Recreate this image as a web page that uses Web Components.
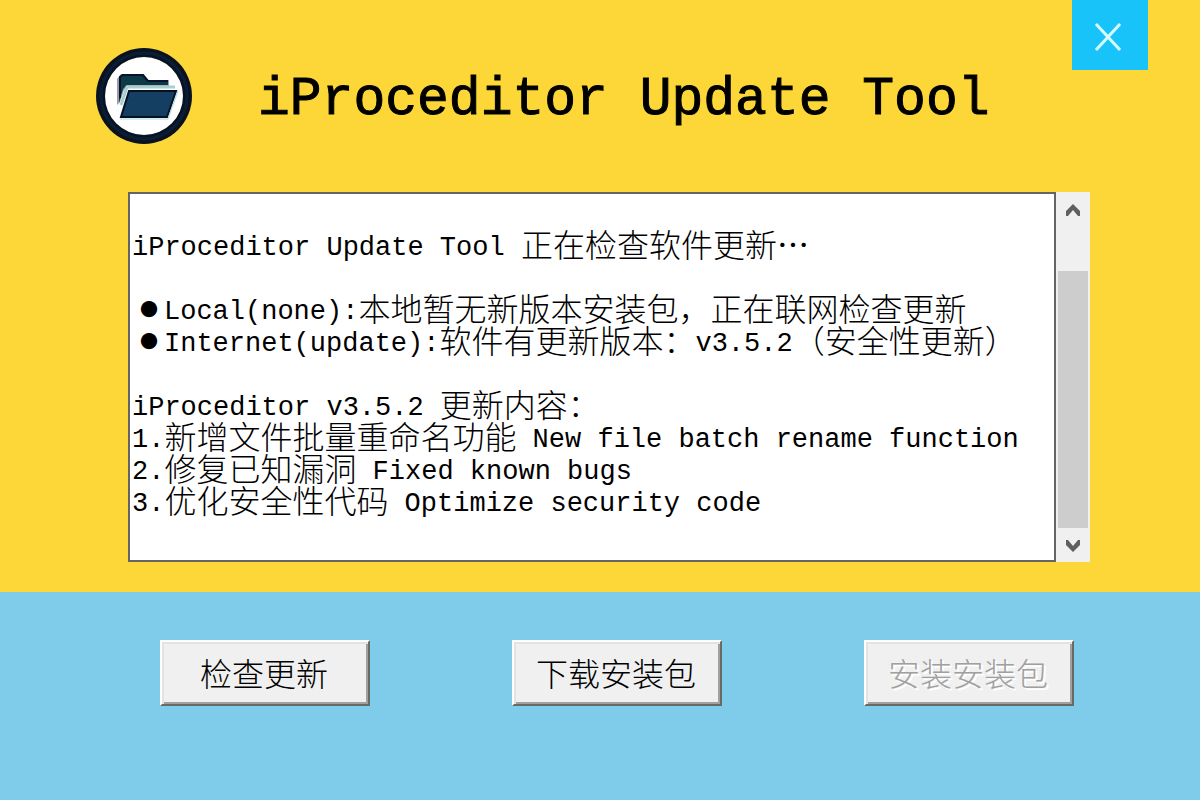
<!DOCTYPE html>
<html lang="zh-CN">
<head>
<meta charset="utf-8">
<title>iProceditor Update Tool</title>
<style>
  html, body { margin: 0; height: 100%; }
  body { background: #7ecbea; color: #000; font: 300 32px/32px "Noto Sans CJK SC", sans-serif; }
</style>
</head>
<body>
<update-window>
  <title-bar slot="header">iProceditor Update Tool</title-bar>
  <update-log slot="log">
    <log-line></log-line>
    <log-line><log-latin>iProceditor Update Tool </log-latin>正在检查软件更新<b>…</b></log-line>
    <log-line></log-line>
    <log-line><log-bullet>●</log-bullet><log-latin>Local(none):</log-latin>本地暂无新版本安装包，正在联网检查更新</log-line>
    <log-line><log-bullet>●</log-bullet><log-latin>Internet(update):</log-latin>软件有更新版本：<log-latin>v3.5.2</log-latin>（安全性更新）</log-line>
    <log-line></log-line>
    <log-line><log-latin>iProceditor v3.5.2 </log-latin>更新内容：</log-line>
    <log-line><log-latin>1.</log-latin>新增文件批量重命名功能<log-latin> New file batch rename function</log-latin></log-line>
    <log-line><log-latin>2.</log-latin>修复已知漏洞<log-latin> Fixed known bugs</log-latin></log-line>
    <log-line><log-latin>3.</log-latin>优化安全性代码<log-latin> Optimize security code</log-latin></log-line>
  </update-log>
  <push-button slot="action">检查更新</push-button>
  <push-button slot="action">下载安装包</push-button>
  <push-button slot="action" disabled>安装安装包</push-button>
</update-window>

<script>
const define = (name, html, setup) => {
  const template = document.createElement('template');
  template.innerHTML = html.trim();
  customElements.define(name, class extends HTMLElement {
    constructor() {
      super();
      this.attachShadow({ mode: 'open' }).append(template.content.cloneNode(true));
    }
    connectedCallback() { if (setup) setup(this); }
  });
};

define('app-logo', `
  <style>
    :host { display: block; width: 96px; height: 96px; }
    svg { display: block; width: 100%; height: 100%; }
  </style>
  <svg viewBox="0 0 96 96" aria-hidden="true">
    <circle cx="48" cy="48" r="48" fill="#08131f"/>
    <circle cx="48" cy="48" r="43" fill="none" stroke="#0c1c38" stroke-width="3"/>
    <circle cx="48" cy="48" r="39" fill="#fff"/>
    <path d="M21 57V31l4-5h22l5 6h21v6H33l-5 4-4 12z" fill="#9a9da6"/>
    <path d="M23 55V29l3-3h21l5 6h20v5H31l-4 4z" fill="#0c3a45"/>
    <path d="M24 50V29l3-2h20l5 6h20" fill="none" stroke="#0a1230" stroke-width="2"/>
    <path d="M25 57l6-18h48" fill="none" stroke="#a8d0d0" stroke-width="3"/>
    <path d="M33 43h47l-9 26H25z" fill="#143f62" stroke="#061222" stroke-width="2"/>
    <path d="M24 71h48l10-28" fill="none" stroke="#a8dce0" stroke-width="1"/>
  </svg>`);

define('title-bar', `
  <style>
    :host { display: block; }
    header { display: flex; align-items: flex-start; padding: 0 52px 0 96px; height: 192px; box-sizing: border-box; }
    app-logo { margin-top: 48px; flex: none; }
    h1 { flex: 1; margin: 68px 0 0 66px; font: 400 53px/64px "Liberation Mono", monospace; white-space: nowrap; -webkit-text-stroke: 1px #000; }
    button { flex: none; width: 76px; height: 70px; padding: 0; border: 0; background: #18c3fa; display: grid; place-items: center; }
    svg { width: 28px; height: 28px; margin: 4px 4px 0 0; }
  </style>
  <header>
    <app-logo></app-logo>
    <h1><slot></slot></h1>
    <button type="button" aria-label="关闭">
      <svg viewBox="0 0 28 28" aria-hidden="true"><path d="M2 1l24 26M26 1L2 27" fill="none" stroke="#d8fbff" stroke-width="3"/></svg>
    </button>
  </header>`);

define('log-line', `
  <style>
    :host { display: block; height: 32px; line-height: 32px; white-space: pre; }
  </style><slot></slot>`);

define('log-latin', `
  <style>
    :host { display: inline; font: 400 27px/16px "Liberation Mono", monospace; vertical-align: 2px; }
  </style><slot></slot>`);

define('log-bullet', `
  <style>
    :host { display: inline-block; width: 32px; height: 32px; box-sizing: border-box; padding-left: 8px; font-size: 18px; line-height: 34px; vertical-align: top; }
  </style><slot></slot>`);

define('scroll-bar', `
  <style>
    :host { display: flex; flex-direction: column; width: 32px; background: #f0f0f0; padding-left: 2px; }
    button { height: 34px; padding: 2px 2px 0 0; border: 0; background: none; display: grid; place-items: center; flex: none; }
    svg { width: 14px; height: 12px; }
    .track { flex: 1; display: flex; flex-direction: column; justify-content: flex-end; padding-right: 2px; }
    .thumb { height: 85%; background: #cdcdcd; }
  </style>
  <button type="button" aria-label="向上滚动"><svg viewBox="0 0 14 12" aria-hidden="true"><path d="M0 12V7l7-7 7 7v5h-2L7 6l-5 6z" fill="#606060"/></svg></button>
  <div class="track"><div class="thumb"></div></div>
  <button type="button" aria-label="向下滚动"><svg viewBox="0 0 14 12" aria-hidden="true"><path d="M0 0v5l7 7 7-7V0h-2L7 6 2 0z" fill="#606060"/></svg></button>`);

define('update-log', `
  <style>
    :host { display: flex; margin: 0 110px 0 128px; height: 370px; }
    .view { flex: 1; min-width: 0; overflow: hidden; box-sizing: border-box; border: 2px solid #646464; padding: 1px 2px; background: #fff; }
  </style>
  <div class="view" role="log"><slot></slot></div>
  <scroll-bar></scroll-bar>`);

define('push-button', `
  <style>
    :host { display: block; }
    button { display: block; width: 210px; height: 66px; box-sizing: border-box; padding: 0 2px 2px 0; color: #000; background: #f0f0f0;
      border: 2px solid; border-color: #fff #696969 #696969 #fff;
      box-shadow: inset 2px 2px #e3e3e3, inset -2px -2px #a0a0a0;
      font: inherit; white-space: nowrap; }
    button:disabled { color: #a0a0a0; text-shadow: 2px 2px #fff; }
  </style>
  <button type="button"><slot></slot></button>`,
  el => { el.shadowRoot.querySelector('button').disabled = el.hasAttribute('disabled'); });

define('update-window', `
  <style>
    :host { display: flex; flex-direction: column; min-height: 100%; }
    main { background: #fdd737; padding-bottom: 30px; }
    footer { flex: 1; display: flex; justify-content: space-between; align-items: flex-start; padding: 48px 126px 48px 160px; background: #7ecbea; }
  </style>
  <main><slot name="header"></slot><slot name="log"></slot></main>
  <footer><slot name="action"></slot></footer>`);
</script>
</body>
</html>
